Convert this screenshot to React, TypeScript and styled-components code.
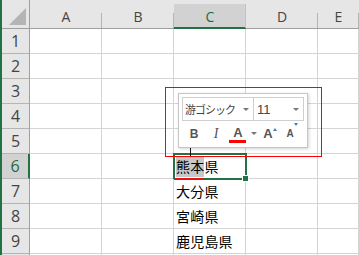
import React from "react";
import styled, { createGlobalStyle, css } from "styled-components";

const GlobalStyle = createGlobalStyle`
  body {
    margin: 0;
    background: #ffffff;
    overflow: hidden;
  }
`;

const GREEN = "#217346";

const Frame = styled.div`
  position: relative;
  width: 359px;
  height: 255px;
  overflow: hidden;
  display: flex;
  background: #ffffff;
`;

const WindowEdge = styled.div`
  width: 2px;
  flex: none;
  background: ${GREEN};
`;

const Grid = styled.div`
  flex: 1;
  display: grid;
  grid-template-columns: 28px 72px 72px 72px 72px 1fr;
  grid-template-rows: 29px repeat(10, 25px);
`;

const Corner = styled.div`
  background: #e6e6e6;
  border-right: 1px solid #9f9f9f;
  border-bottom: 1px solid #9f9f9f;
  box-sizing: border-box;
  display: flex;
  align-items: flex-start;
  justify-content: flex-start;
  padding: 8px 0 0 7px;
  svg {
    display: block;
  }
`;

const ColHeader = styled.div<{ $active?: boolean }>`
  position: relative;
  box-sizing: border-box;
  background: #e6e6e6;
  border-bottom: 1px solid #9f9f9f;
  display: flex;
  align-items: center;
  justify-content: center;
  padding-top: 4px;
  font-family: "Open Sans", "Liberation Sans", sans-serif;
  font-size: 14px;
  color: #444444;
  &::after {
    content: "";
    position: absolute;
    right: 0;
    top: 13px;
    bottom: 0;
    width: 1px;
    background: #b4b4b4;
  }
  ${(p) =>
    p.$active &&
    css`
      background: linear-gradient(#e6e6e6 0 4px, #d2d2d2 4px);
      border-bottom-color: ${GREEN};
      box-shadow: inset 0 -1px 0 ${GREEN};
      color: #1d6a43;
      &::after {
        top: 4px;
        background: #c2c2c2;
      }
    `}
`;

const RowHeader = styled.div<{ $active?: boolean }>`
  box-sizing: border-box;
  background: #e6e6e6;
  border-right: 1px solid #9f9f9f;
  border-bottom: 1px solid #b4b4b4;
  display: flex;
  align-items: center;
  justify-content: center;
  font-family: "Open Sans", "Liberation Sans", sans-serif;
  font-size: 16px;
  color: #444444;
  ${(p) =>
    p.$active &&
    css`
      background: #d2d2d2;
      border-right: 2px solid ${GREEN};
      color: #1d6a43;
    `}
`;

const Cell = styled.div<{ $selected?: boolean }>`
  position: relative;
  box-sizing: border-box;
  border-right: 1px solid #d4d4d4;
  border-bottom: 1px solid #d4d4d4;
  display: flex;
  align-items: center;
  padding-left: 2px;
  white-space: nowrap;
  font-family: "Noto Sans CJK JP", "Noto Sans", sans-serif;
  font-size: 14px;
  letter-spacing: 0.2px;
  color: #000000;
  ${(p) =>
    p.$selected &&
    css`
      &::after {
        content: "";
        position: absolute;
        left: -1px;
        top: -1px;
        right: -2px;
        bottom: -2px;
        border: 2px solid ${GREEN};
        box-sizing: border-box;
      }
      &::before {
        content: "";
        position: absolute;
        right: -4px;
        bottom: -4px;
        width: 5px;
        height: 5px;
        background: ${GREEN};
        border: 1px solid #ffffff;
        z-index: 1;
      }
    `}
`;

const Marked = styled.span`
  display: inline-block;
  background: #c8c8c8;
  line-height: 21px;
  height: 21px;
`;

const ImeUnderline = styled.div`
  position: absolute;
  left: 176px;
  top: 178px;
  width: 28px;
  height: 2px;
  background: #ee1111;
`;

const IBeam = styled.div`
  position: absolute;
  left: 190px;
  top: 148px;
  width: 1px;
  height: 9px;
  background: #111111;
  &::after {
    content: "";
    position: absolute;
    left: -2px;
    bottom: 0;
    width: 5px;
    height: 1px;
    background: #111111;
  }
`;

const MiniToolbar = styled.div`
  position: absolute;
  left: 178px;
  top: 93px;
  width: 130px;
  height: 55px;
  box-sizing: border-box;
  background: #ffffff;
  border: 1px solid #c6c6c6;
  box-shadow: 1px 1px 3px rgba(0, 0, 0, 0.18);
  padding: 3px 0 0 3px;
  display: flex;
  flex-direction: column;
  gap: 2px;
`;

const ComboRow = styled.div`
  display: flex;
`;

const Combo = styled.div<{ $w: number; $joined?: boolean }>`
  width: ${(p) => p.$w}px;
  height: 24px;
  box-sizing: border-box;
  border: 1px solid #cfcfcf;
  ${(p) => p.$joined && "border-left: none;"}
  display: flex;
  align-items: center;
  justify-content: space-between;
  padding: 0 4px 0 2px;
  color: #444444;
`;

const FontName = styled.span`
  font-family: "Noto Sans CJK JP", sans-serif;
  font-size: 11px;
  letter-spacing: -1px;
`;

const FontSize = styled.span`
  font-family: "Liberation Sans", sans-serif;
  font-size: 13px;
  padding-left: 1px;
`;

const Caret = styled.span<{ $color?: string }>`
  width: 0;
  height: 0;
  border-left: 3px solid transparent;
  border-right: 3px solid transparent;
  border-top: 3px solid ${(p) => p.$color || "#777777"};
`;

const ButtonRow = styled.div`
  display: flex;
  align-items: center;
  height: 21px;
  padding-left: 1px;
`;

const ToolButton = styled.div<{ $w?: number }>`
  position: relative;
  width: ${(p) => p.$w ?? 22}px;
  height: 21px;
  display: flex;
  align-items: center;
  justify-content: center;
  color: #555555;
  font-family: "Liberation Sans", sans-serif;
`;

const BoldGlyph = styled.span`
  font-weight: bold;
  font-size: 12px;
  line-height: 1;
`;

const ItalicGlyph = styled.span`
  font-family: "Liberation Serif", serif;
  font-style: italic;
  font-size: 14px;
  line-height: 1;
`;

const ColorGlyph = styled.span`
  font-size: 13px;
  font-weight: bold;
  line-height: 1;
  margin-top: -3px;
`;

const ColorBar = styled.span`
  position: absolute;
  left: 2px;
  bottom: 1px;
  width: 17px;
  height: 3px;
  background: #ff0000;
`;

const SizeGlyph = styled.span<{ $size: number }>`
  font-size: ${(p) => p.$size}px;
  font-weight: bold;
  line-height: 1;
`;

const SizeArrow = styled.span<{ $up?: boolean; $top: number }>`
  align-self: flex-start;
  margin-top: ${(p) => p.$top}px;
  width: 0;
  height: 0;
  border-left: 2.5px solid transparent;
  border-right: 2.5px solid transparent;
  ${(p) =>
    p.$up
      ? "border-bottom: 3px solid #3f7fc4;"
      : "border-top: 3px solid #3f7fc4;"}
`;

const Annotation = styled.div`
  position: absolute;
  left: 165px;
  top: 87px;
  width: 157px;
  height: 70px;
  box-sizing: border-box;
  border: 1px solid #ff0000;
  pointer-events: none;
`;

const columns = ["A", "B", "C", "D", "E"];
const values: Record<number, string> = {
  7: "大分県",
  8: "宮崎県",
  9: "鹿児島県",
};

export default function App() {
  return (
    <>
      <GlobalStyle />
      <Frame>
        <WindowEdge />
        <Grid>
          <Corner>
            <svg width="17" height="17" viewBox="0 0 17 17">
              <polygon points="17,0 17,17 0,17" fill="#b4b4b4" />
            </svg>
          </Corner>
          {columns.map((c) => (
            <ColHeader key={c} $active={c === "C"}>
              {c}
            </ColHeader>
          ))}
          {Array.from({ length: 10 }, (_, i) => i + 1).map((row) => (
            <React.Fragment key={row}>
              {/* row 10 only peeks in by a pixel, its number sits below the window */}
              <RowHeader $active={row === 6}>{row < 10 ? row : null}</RowHeader>
              {columns.map((c) => (
                <Cell key={c} $selected={c === "C" && row === 6}>
                  {c === "C" && row === 6 ? (
                    <>
                      <Marked>熊本</Marked>県
                    </>
                  ) : c === "C" ? (
                    values[row]
                  ) : null}
                </Cell>
              ))}
            </React.Fragment>
          ))}
        </Grid>

        <ImeUnderline />
        <IBeam />

        <MiniToolbar>
          <ComboRow>
            <Combo $w={72}>
              <FontName>游ゴシック</FontName>
              <Caret />
            </Combo>
            <Combo $w={50} $joined>
              <FontSize>11</FontSize>
              <Caret />
            </Combo>
          </ComboRow>
          <ButtonRow>
            <ToolButton>
              <BoldGlyph>B</BoldGlyph>
            </ToolButton>
            <ToolButton>
              <ItalicGlyph>I</ItalicGlyph>
            </ToolButton>
            <ToolButton>
              <ColorGlyph>A</ColorGlyph>
              <ColorBar />
            </ToolButton>
            <ToolButton $w={10}>
              <Caret />
            </ToolButton>
            <ToolButton>
              <SizeGlyph $size={13}>A</SizeGlyph>
              <SizeArrow $up $top={5} />
            </ToolButton>
            <ToolButton>
              <SizeGlyph $size={10}>A</SizeGlyph>
              <SizeArrow $top={0} />
            </ToolButton>
          </ButtonRow>
        </MiniToolbar>

        <Annotation />
      </Frame>
    </>
  );
}
